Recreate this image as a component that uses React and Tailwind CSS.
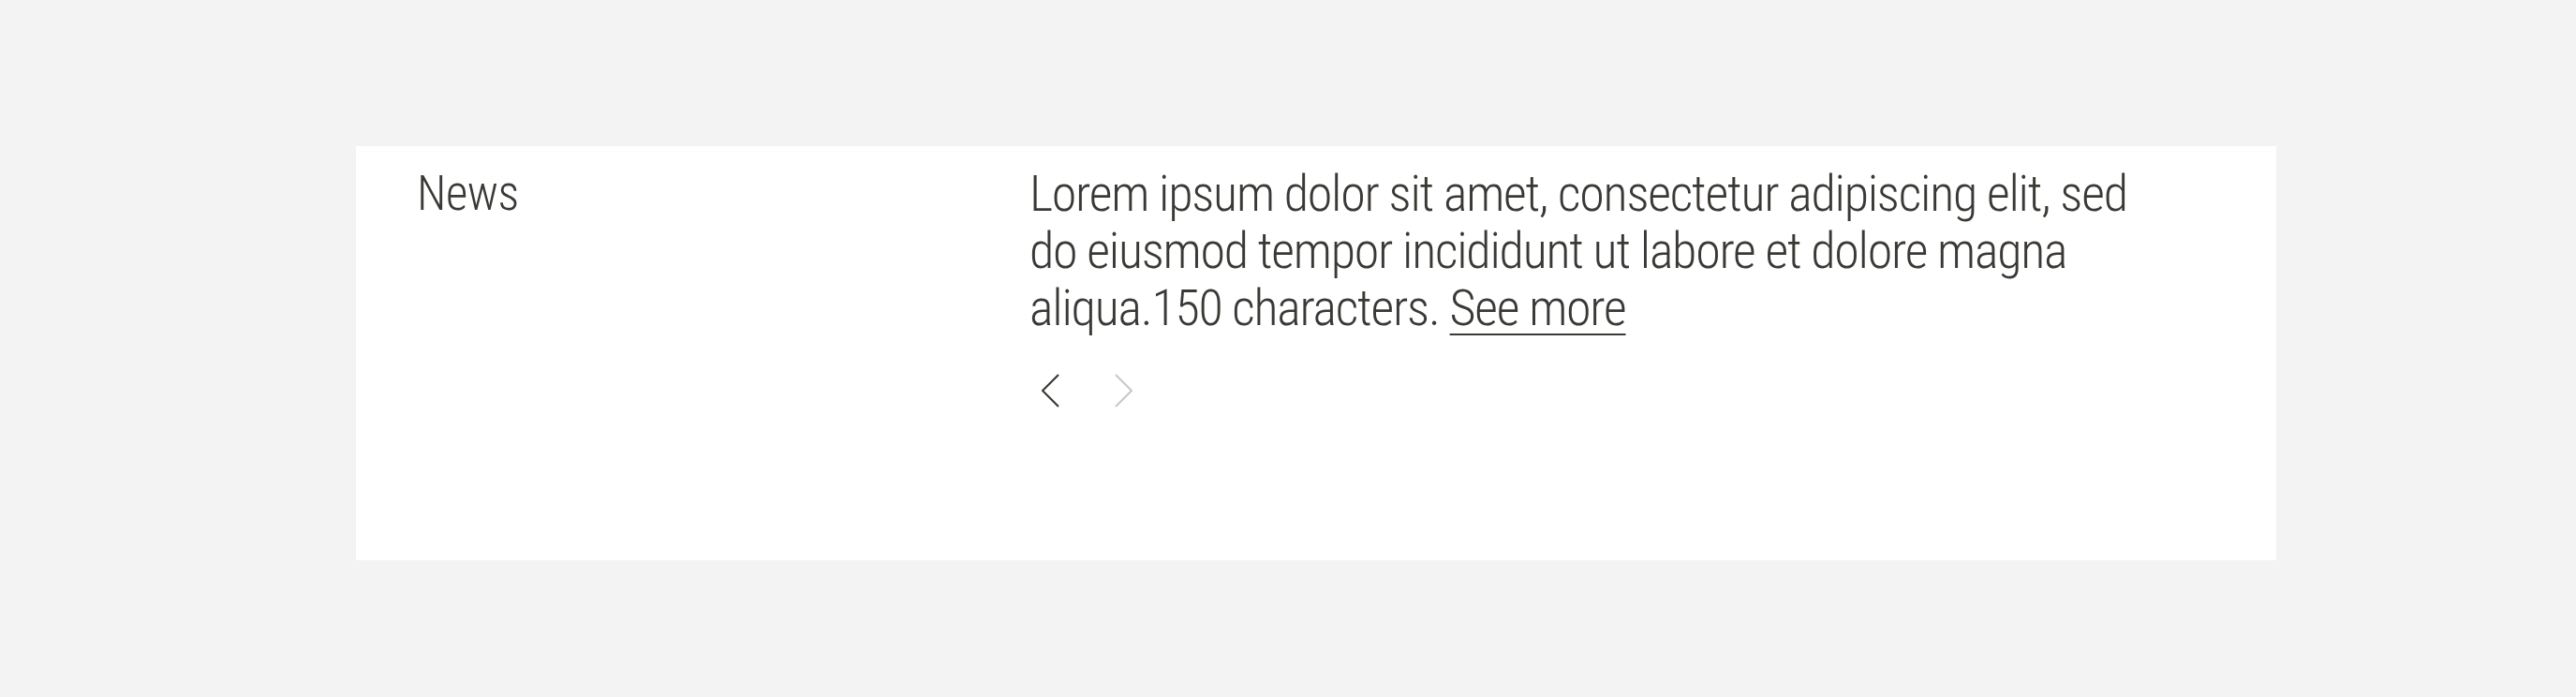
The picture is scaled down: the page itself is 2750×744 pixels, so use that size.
function Chevron({ dir }) {
  const pts = dir === "left" ? "18,1 1,18 18,35" : "1,1 18,18 1,35";
  return (
    <svg width="19" height="36" viewBox="0 0 19 36" aria-hidden="true">
      <polyline points={pts} fill="none" stroke="currentColor" strokeWidth="2.2" />
    </svg>
  );
}

export default function App() {
  const font = { fontFamily: '"Roboto Condensed", "Roboto", sans-serif' };
  return (
    <div className="min-h-[744px] bg-[#f3f3f3] pt-[156px] pl-[380px]" style={font}>
      <section className="flex h-[442px] w-[2050px] bg-white pl-[65px] pt-[20px] text-[#3b3935]">
        <h2 className="w-[654px] shrink-0 text-[51px] font-light leading-[61px] tracking-[-0.01em]">News</h2>
        <div className="flex flex-col">
          <p className="w-[1215px] text-[54px] font-light leading-[61px] tracking-[-0.023em]">
            Lorem ipsum dolor sit amet, consectetur adipiscing elit, sed do eiusmod tempor incididunt ut labore et dolore magna aliqua.150 characters.{" "}
            <a href="#" className="underline decoration-2 underline-offset-[9px]">See more</a>
          </p>
          <div className="mt-[36px] flex gap-[34px]">
            <button type="button" className="flex h-[44px] w-[44px] items-center justify-center text-[#3b3935]" aria-label="Previous">
              <Chevron dir="left" />
            </button>
            <button type="button" className="flex h-[44px] w-[44px] items-center justify-center text-[#c9c9c9]" aria-label="Next" disabled>
              <Chevron dir="right" />
            </button>
          </div>
        </div>
      </section>
    </div>
  );
}
